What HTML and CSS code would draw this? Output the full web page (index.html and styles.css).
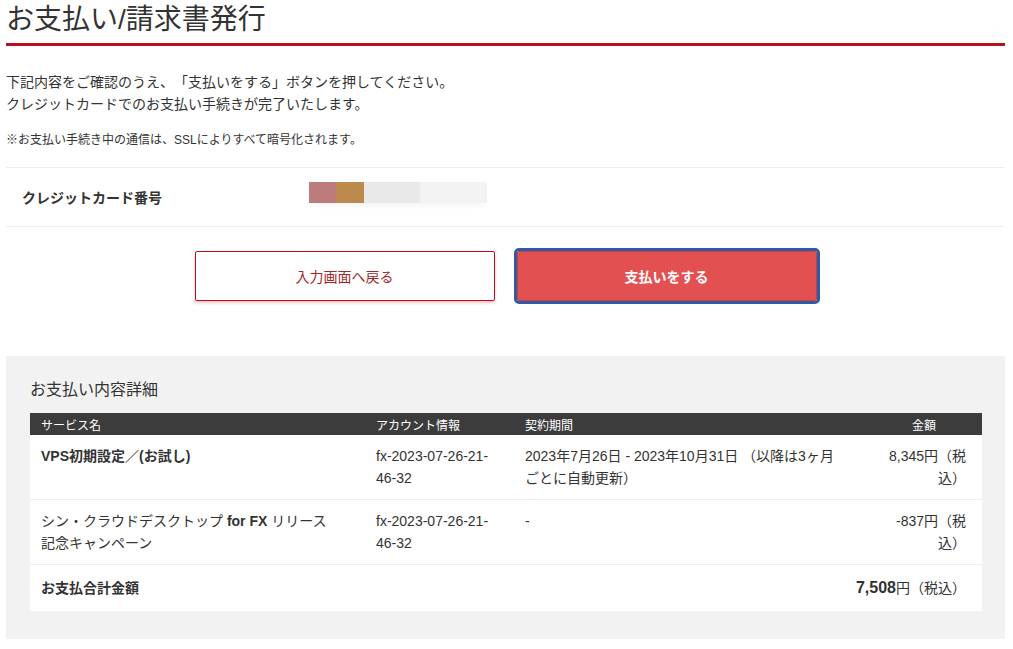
FILE: index.html
```html
<!DOCTYPE html>
<html lang="ja">
<head>
    <meta charset="UTF-8">
    <meta name="viewport" content="width=device-width, initial-scale=1.0">
    <title>お支払い/請求書発行</title>
    <link rel="stylesheet" href="styles.css">
</head>
<body>
<div class="page">
    <h1 class="title">お支払い/請求書発行</h1>

    <p class="intro">
        下記内容をご確認のうえ、「支払いをする」ボタンを押してください。<br>
        クレジットカードでのお支払い手続きが完了いたします。
    </p>
    <p class="note">※お支払い手続き中の通信は、SSLによりすべて暗号化されます。</p>

    <div class="card-row">
        <div class="card-label">クレジットカード番号</div>
        <div class="card-value">
            <span class="blur b1"></span><span class="blur b2"></span><span class="blur b3"></span><span class="blur b4"></span>
        </div>
    </div>

    <div class="buttons">
        <button class="btn btn-back" type="button">入力画面へ戻る</button>
        <button class="btn btn-pay" type="button">支払いをする</button>
    </div>

    <div class="detail">
        <h2 class="detail-title">お支払い内容詳細</h2>
        <table class="detail-table">
            <colgroup>
                <col class="c-service">
                <col class="c-account">
                <col class="c-period">
                <col class="c-amount">
            </colgroup>
            <thead>
            <tr>
                <th>サービス名</th>
                <th>アカウント情報</th>
                <th>契約期間</th>
                <th class="th-amount">金額</th>
            </tr>
            </thead>
            <tbody>
            <tr>
                <td class="service"><b>VPS初期設定／(お試し)</b></td>
                <td>fx-2023-07-26-21-<wbr>46-32</td>
                <td>2023年7月26日 - 2023年10月31日 （以降は3ヶ月<br>ごとに自動更新）</td>
                <td class="amount">8,345円（税込）</td>
            </tr>
            <tr>
                <td class="service">シン・クラウドデスクトップ <b>for FX</b> リリース<br>記念キャンペーン</td>
                <td>fx-2023-07-26-21-<wbr>46-32</td>
                <td>-</td>
                <td class="amount">-837円（税込）</td>
            </tr>
            <tr class="total">
                <td class="total-label">お支払合計金額</td>
                <td colspan="3" class="amount"><b class="total-num">7,508</b>円（税込）</td>
            </tr>
            </tbody>
        </table>
    </div>
</div>
</body>
</html>
```

FILE: styles.css
```css
body {
    margin: 0;
    background-color: #fff;
    color: #333;
    font-family: "Liberation Sans", "Noto Sans CJK JP", sans-serif;
    font-size: 14px;
    text-spacing-trim: space-all;
}
.page {
    width: 999px;
    padding: 0 8px 0 6px;
}
.title {
    margin: 0;
    font-size: 28px;
    font-weight: normal;
    line-height: 40px;
    padding-bottom: 3px;
    border-bottom: 3px solid #b5121b;
    color: #333;
}
.intro {
    margin: 25px 0 0;
    line-height: 22px;
}
.note {
    margin: 16px 0 0;
    font-size: 12px;
    line-height: 18px;
}
.card-row {
    display: flex;
    align-items: center;
    height: 58px;
    margin-top: 18px;
    border-top: 1px solid #eee;
    border-bottom: 1px solid #eee;
}
.card-label {
    width: 287px;
    padding-left: 16px;
    font-weight: bold;
}
.card-value {
    display: flex;
    height: 21px;
    margin-top: -10px;
    box-shadow: 0 6px 6px -4px #f2f2f2;
}
.blur {
    display: block;
    height: 21px;
}
.b1 { width: 27px; background-color: #bc7b7c; }
.b2 { width: 28px; background-color: #bb8a4c; }
.b3 { width: 56px; background-color: #e9e9e9; }
.b4 { width: 67px; background-color: #f3f3f3; }
.buttons {
    display: flex;
    justify-content: center;
    gap: 22px;
    margin-top: 24px;
}
.btn {
    width: 300px;
    height: 50px;
    font-family: inherit;
    font-size: 14px;
    cursor: pointer;
}
.btn-back {
    background-color: #fff;
    color: #a3282b;
    border: 1px solid #b5121b;
    border-radius: 2px;
    box-shadow: 0 2px 3px rgba(181, 18, 27, 0.25);
}
.btn-pay {
    background-color: #e35052;
    color: #fff;
    font-weight: bold;
    border: 1px solid #c8403f;
    outline: 3px solid #2e5aa6;
    outline-offset: 0;
    border-radius: 2px;
}
.detail {
    margin-top: 55px;
    background-color: #f2f2f2;
    padding: 22px 23px 28px 24px;
}
.detail-title {
    margin: 0 0 11px;
    font-size: 16px;
    font-weight: normal;
    line-height: 24px;
}
.detail-table {
    width: 100%;
    border-collapse: collapse;
    table-layout: fixed;
    background-color: #fff;
}
.c-service { width: 335px; }
.c-account { width: 149px; }
.c-period { width: 352px; }
.c-amount { width: 116px; }
.detail-table th {
    background-color: #3c3c3c;
    color: #fff;
    font-size: 12px;
    font-weight: normal;
    text-align: left;
    height: 22px;
    padding: 0 11px;
}
.detail-table th.th-amount {
    text-align: center;
    padding-right: 11px;
}
.detail-table td {
    vertical-align: top;
    line-height: 22px;
    padding: 10px 11px 10px;
    border-bottom: 1px solid #eee;
}
.detail-table td.amount {
    text-align: right;
    padding-right: 16px;
}
.total td {
    padding-top: 12px;
    padding-bottom: 12px;
    border-bottom: none;
}
.total-label {
    font-weight: bold;
}
.total-num {
    font-size: 16px;
}
```
